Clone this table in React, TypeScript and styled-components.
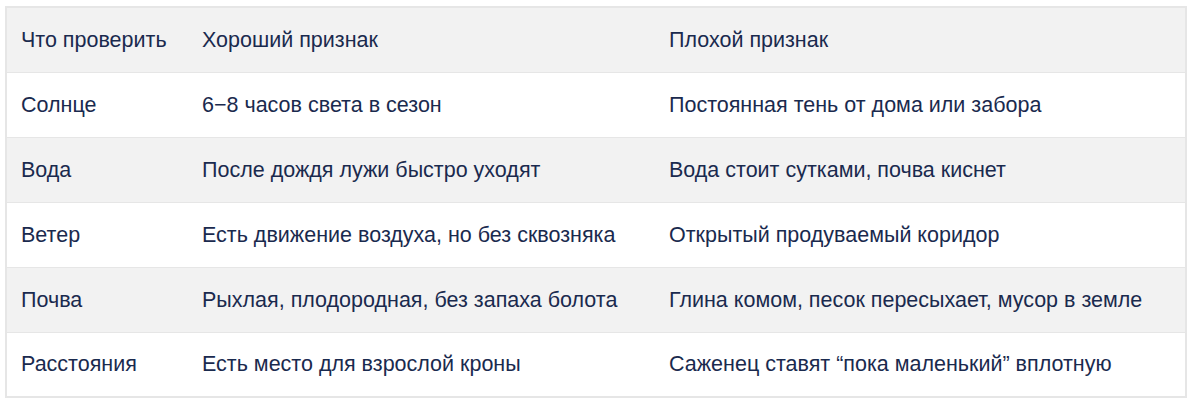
import { FC } from 'react'
import styled, { createGlobalStyle } from 'styled-components'

const GlobalStyle = createGlobalStyle`
  html, body {
    margin: 0;
    padding: 0;
    background: #ffffff;
  }
  body {
    padding: 6px 0 0 5px;
    font-family: 'Liberation Sans', Arial, sans-serif;
  }
`

const Table = styled.table`
  width: 1182px;
  border-collapse: collapse;
  border: 2px solid #e6e6e6;
  color: #1a2a4e;
  font-size: 21.5px;
  line-height: 26px;
`

const Row = styled.tr<{ $striped?: boolean }>`
  height: 65px;
  background: ${(p) => (p.$striped ? '#f2f2f2' : '#ffffff')};
  border-bottom: 1px solid #e6e6e6;
`

const Cell = styled.td<{ $width?: string }>`
  padding: 0 14px;
  width: ${(p) => p.$width ?? 'auto'};
  vertical-align: middle;
  text-align: left;
  font-weight: 400;
  white-space: nowrap;
`

const HeadCell = styled(Cell).attrs({ as: 'th' })``

const rows = [
  ['Солнце', '6−8 часов света в сезон', 'Постоянная тень от дома или забора'],
  ['Вода', 'После дождя лужи быстро уходят', 'Вода стоит сутками, почва киснет'],
  ['Ветер', 'Есть движение воздуха, но без сквозняка', 'Открытый продуваемый коридор'],
  ['Почва', 'Рыхлая, плодородная, без запаха болота', 'Глина комом, песок пересыхает, мусор в земле'],
  ['Расстояния', 'Есть место для взрослой кроны', 'Саженец ставят “пока маленький” вплотную'],
]

const App: FC = () => (
  <>
    <GlobalStyle />
    <Table>
      <thead>
        <Row $striped>
          <HeadCell $width='153px'>Что проверить</HeadCell>
          <HeadCell $width='439px'>Хороший признак</HeadCell>
          <HeadCell>Плохой признак</HeadCell>
        </Row>
      </thead>
      <tbody>
        {rows.map((r, i) => (
          <Row key={r[0]} $striped={i % 2 === 1}>
            <Cell>{r[0]}</Cell>
            <Cell>{r[1]}</Cell>
            <Cell>{r[2]}</Cell>
          </Row>
        ))}
      </tbody>
    </Table>
  </>
)

export default App
